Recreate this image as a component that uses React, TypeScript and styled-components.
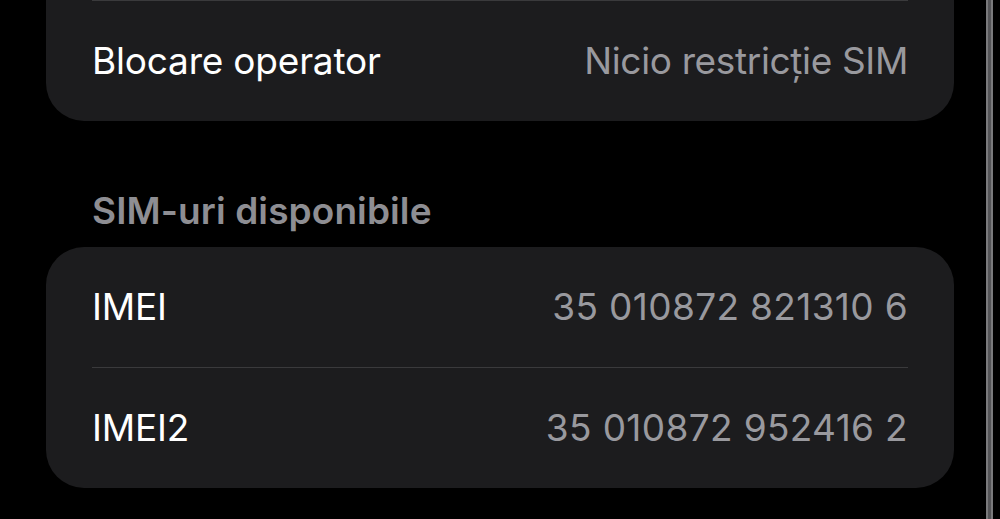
import React from "react";
import styled, { createGlobalStyle } from "styled-components";

const GlobalStyle = createGlobalStyle`
  html, body {
    margin: 0;
    padding: 0;
    background: #000;
    overflow: hidden;
  }
  body {
    font-family: Inter, "Noto Sans", "Liberation Sans", sans-serif;
    -webkit-font-smoothing: antialiased;
  }
`;

const Screen = styled.div`
  display: flex;
  width: 1000px;
  height: 519px;
  background: #000;
  overflow: hidden;
`;

const Content = styled.main`
  flex: 0 0 986px;
  display: flex;
  flex-direction: column;
  padding: 0 32px 0 46px;
  box-sizing: border-box;
`;

const ScrollTrack = styled.div`
  flex: 0 0 7px;
  height: 100%;
  box-sizing: border-box;
  background: #555558;
  border-left: 2px solid #7a7a7c;
  border-right: 2px solid #7a7a7c;
`;

const Card = styled.section<{ $cutTop?: boolean }>`
  background: #1c1c1e;
  border-radius: ${(p) => (p.$cutTop ? "0 0 38px 38px" : "38px")};
  padding: 0 46px;
  display: flex;
  flex-direction: column;
`;

const Row = styled.div<{ $divider?: boolean }>`
  height: 120px;
  display: flex;
  align-items: center;
  justify-content: space-between;
  border-top: ${(p) => (p.$divider ? "1.5px solid #3a3a3c" : "none")};
  box-sizing: content-box;
`;

const Label = styled.span`
  color: #ffffff;
  font-size: 37px;
  line-height: 44px;
  letter-spacing: -0.2px;
`;

const Value = styled.span<{ $numeric?: boolean }>`
  color: #99999e;
  font-size: 37px;
  line-height: 44px;
  letter-spacing: ${(p) => (p.$numeric ? "0.35px" : "-0.35px")};
`;

const SectionHeader = styled.h2`
  margin: 0;
  padding: 68px 46px 14px;
  color: #8e8e93;
  font-size: 37px;
  line-height: 44px;
  font-weight: 600;
  letter-spacing: 0.1px;
`;

export default function App() {
  return (
    <>
      <GlobalStyle />
      <Screen>
        <Content>
          <Card $cutTop>
            <Row $divider>
              <Label>Blocare operator</Label>
              <Value>Nicio restricție SIM</Value>
            </Row>
          </Card>
          <SectionHeader>SIM-uri disponibile</SectionHeader>
          <Card>
            <Row>
              <Label>IMEI</Label>
              <Value $numeric>35 010872 821310 6</Value>
            </Row>
            <Row $divider>
              <Label>IMEI2</Label>
              <Value $numeric>35 010872 952416 2</Value>
            </Row>
          </Card>
        </Content>
        <ScrollTrack />
      </Screen>
    </>
  );
}
